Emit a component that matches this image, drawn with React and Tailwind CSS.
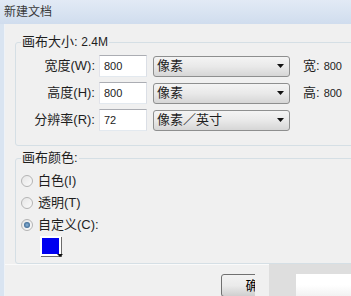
import React from 'react';

const font = { fontFamily: '"Liberation Sans", "Noto Sans CJK SC", sans-serif' };

const Field = ({ label, value, unit, extra }) => (
  <div className="flex items-center h-[22px]">
    <div className="w-[79px] shrink-0 text-right text-[13px] text-[#1e1e1e]">{label}</div>
    <div className="ml-[4px] w-[48px] h-[22px] shrink-0 bg-white border border-[#abadb3] border-l-[#e2e3ea] border-r-[#dbdfe6] border-b-[#e3e9ef] flex items-center pl-[4px] text-[11px] text-[#222]">
      {value}
    </div>
    <div className="ml-[6px] w-[137px] h-[21px] shrink-0 rounded-[3px] border border-[#8e8f8f] bg-linear-to-b from-[#f4f4f4] via-[#e9e9e9] to-[#d6d6d6] flex items-center justify-between pl-[3px] pr-[5px] text-[13px] text-[#1e1e1e]">
      <span>{unit}</span>
      <svg width="7" height="4" viewBox="0 0 7 4"><path d="M0 0h7L3.5 4z" fill="#111" /></svg>
    </div>
    {extra && <div className="ml-[13px] shrink-0 text-[13px] text-[#1e1e1e] flex items-center gap-[4px]">
      <span>{extra[0]}</span><span className="text-[11px]">{extra[1]}</span>
    </div>}
  </div>
);

const Radio = ({ label, checked }) => (
  <div className="flex items-center h-[22px] pl-[5px] gap-[5px]">
    <div className="w-[12px] h-[12px] rounded-full border border-[#b4b4b4] bg-linear-to-br from-[#e6e6e6] to-[#fafafa] flex items-center justify-center">
      {checked && <div className="w-[6px] h-[6px] rounded-full bg-radial from-[#8fb6d8] to-[#1d4e7c]" />}
    </div>
    <span className="text-[13px] text-[#1e1e1e]">{label}</span>
  </div>
);

export default function App() {
  return (
    <div className="w-[351px] h-[296px] overflow-hidden flex flex-col bg-[#d9e4f1]" style={font}>
      <div className="h-[24px] shrink-0 pl-[4px] flex items-center text-[12px] text-[#3a3a3a] bg-linear-to-b from-[#e2eaf5] to-[#d0ddee]">
        新建文档
      </div>
      <div className="flex-1 ml-[4px] border-l border-[#eef2f7] bg-[#f0f0f0] flex flex-col overflow-hidden">
        <div className="pl-[10px] pt-[10px]">
          <fieldset className="w-[350px] border border-[#d5dfe5] rounded-[3px] pt-[5px] pb-[14px] flex flex-col gap-[5px]">
            <legend className="ml-[5px] px-[1px] text-[13px] leading-[16px] text-[#1e1e1e]">画布大小: <span className="text-[12px]">2.4M</span></legend>
            <Field label="宽度(W):" value="800" unit="像素" extra={['宽:', '800']} />
            <Field label="高度(H):" value="800" unit="像素" extra={['高:', '800']} />
            <Field label="分辨率(R):" value="72" unit="像素／英寸" />
          </fieldset>
          <fieldset className="mt-[4px] w-[350px] border border-[#d5dfe5] rounded-[3px] pt-[4px] pb-[6px]">
            <legend className="ml-[5px] px-[1px] text-[13px] leading-[16px] text-[#1e1e1e]">画布颜色:</legend>
            <Radio label="白色(I)" />
            <Radio label="透明(T)" />
            <Radio label="自定义(C):" checked />
            <div className="ml-[24px] relative w-[22px] h-[21px]">
              <div className="w-[21px] h-[20px] bg-[#0000f0] border-2 border-white shadow-[1px_1px_0_#6b6b6b]" />
              <svg className="absolute right-[-1px] bottom-[-1px]" width="6" height="4" viewBox="0 0 6 4"><path d="M0 0h6L3 3z" fill="#111" /></svg>
            </div>
          </fieldset>
        </div>
        <div className="mt-auto h-[32px] shrink-0 flex">
          <div className="w-[264px] shrink-0 border-t border-[#fafafa] pl-[216px] pt-[9px]">
            <div className="w-[34px] h-[24px] overflow-hidden">
              <div className="w-[75px] h-[23px] rounded-[3px] border border-[#707070] bg-linear-to-b from-[#f2f2f2] via-[#ebebeb] to-[#cfcfcf] flex items-center justify-center text-[13px] text-black">
                确定
              </div>
            </div>
          </div>
          <div className="flex-1 bg-[#dedede] pl-[27px] pt-[10px]">
            <div className="h-full bg-linear-to-b from-white via-white to-[#f2f2f2]" />
          </div>
        </div>
      </div>
    </div>
  );
}
